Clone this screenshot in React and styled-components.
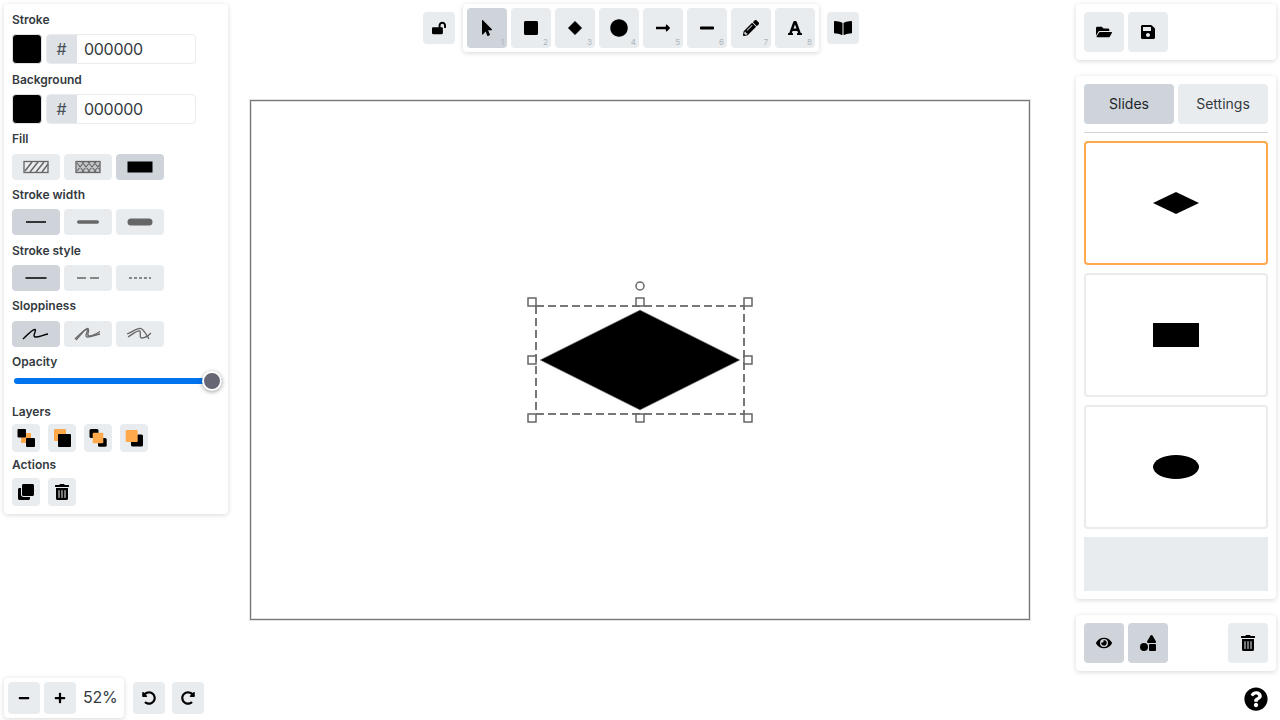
import React from "react";
import styled, { createGlobalStyle } from "styled-components";
import {
  FaLockOpen,
  FaMousePointer,
  FaSquare,
  FaCircle,
  FaLongArrowAltRight,
  FaMinus,
  FaPlus,
  FaPencilAlt,
  FaFont,
  FaBookOpen,
  FaFolderOpen,
  FaSave,
  FaEye,
  FaShapes,
  FaTrashAlt,
  FaQuestionCircle,
  FaUndoAlt,
  FaRedoAlt,
  FaClone,
} from "react-icons/fa";

const GlobalStyle = createGlobalStyle`
  html, body {
    margin: 0;
    background: #fff;
    font-family: Inter, "Liberation Sans", sans-serif;
    color: #212529;
  }
  * { box-sizing: border-box; }
`;

const Page = styled.div`
  width: 1280px;
  height: 720px;
  padding: 4px 4px 3px;
  display: grid;
  grid-template-columns: 246px 780px 246px;
  overflow: hidden;
`;

const LeftColumn = styled.div`
  display: flex;
  flex-direction: column;
  justify-content: space-between;
  align-items: flex-start;
`;

const CenterColumn = styled.div`
  display: flex;
  flex-direction: column;
  align-items: center;
`;

const RightColumn = styled.div`
  display: flex;
  flex-direction: column;
  align-items: flex-end;
  gap: 16px;
`;

const Panel = styled.div`
  background: #fff;
  border-radius: 4px;
  box-shadow: 0 1px 5px rgba(0, 0, 0, 0.16);
  padding: ${(p) => p.$padding || "8px"};
  width: ${(p) => p.$width || "auto"};
`;

const Label = styled.div`
  font-size: 12px;
  line-height: 14px;
  font-weight: 600;
  color: #343a40;
  margin-top: ${(p) => p.$top ?? 8}px;
  margin-bottom: ${(p) => p.$bottom ?? 8}px;
`;

const Row = styled.div`
  display: flex;
  align-items: center;
  gap: ${(p) => p.$gap ?? 4}px;
`;

const Swatch = styled.div`
  width: 30px;
  height: 30px;
  border-radius: 4px;
  background: #000;
  border: 1px solid #dee2e6;
`;

const HexGroup = styled.div`
  width: 150px;
  height: 30px;
  display: flex;
  border: 1px solid #e9ecef;
  border-radius: 4px;
  overflow: hidden;
`;

const HexPrefix = styled.div`
  width: 30px;
  padding-right: 1px;
  background: #dee2e6;
  color: #495057;
  font-size: 16px;
  display: flex;
  align-items: center;
  justify-content: center;
`;

const HexValue = styled.div`
  flex: 1;
  padding-left: 7px;
  font-size: 16px;
  letter-spacing: -0.3px;
  line-height: 28px;
  color: #343a40;
`;

const OptionButton = styled.div`
  width: 48px;
  height: 26px;
  border-radius: 4px;
  background: ${(p) => (p.$active ? "#ced4da" : "#e9ecef")};
  display: flex;
  align-items: center;
  justify-content: center;
`;

const SquareButton = styled.div`
  position: relative;
  width: ${(p) => p.$size || 40}px;
  height: ${(p) => p.$size || 40}px;
  flex: none;
  border-radius: 4px;
  background: ${(p) => (p.$active ? "#ced4da" : "#e9ecef")};
  color: #000;
  display: flex;
  align-items: center;
  justify-content: center;
  font-size: ${(p) => p.$icon || 16}px;
`;

const Shortcut = styled.span`
  position: absolute;
  right: 3px;
  bottom: 1px;
  font-size: 8px;
  line-height: 10px;
  color: #adb5bd;
`;

const OpacitySlider = styled.input`
  display: block;
  appearance: none;
  width: 208px;
  height: 20px;
  margin: 0 0 0 2px;
  background: transparent;

  &::-webkit-slider-runnable-track {
    height: 6px;
    border-radius: 3px;
    background: #0073ee;
  }
  &::-webkit-slider-thumb {
    appearance: none;
    width: 20px;
    height: 20px;
    margin-top: -7px;
    border-radius: 50%;
    background: #666675;
    border: 2px solid #fff;
    box-shadow: 0 1px 4px rgba(0, 0, 0, 0.4);
  }
`;

const ZoomRow = styled.div`
  display: flex;
  align-items: center;
  gap: 9px;
`;

const ZoomValue = styled.span`
  width: 40px;
  padding: 0 0 2px 3px;
  font-size: 16px;
  letter-spacing: -0.2px;
  line-height: 30px;
  color: #343a40;
`;

const ToolRow = styled.div`
  display: flex;
  align-items: center;
  gap: 8px;
  margin: 0 0 48px 2px;
`;

const CanvasFrame = styled.div`
  width: 780px;
  height: 520px;
  border: 1px solid #777;
  background: #fff;
  box-shadow: 0 0 0 1px rgba(0, 0, 0, 0.1), inset 0 0 0 1px rgba(0, 0, 0, 0.12);
`;

const Tab = styled.div`
  flex: 1;
  height: 40px;
  padding-bottom: 2px;
  border-radius: 4px;
  background: ${(p) => (p.$active ? "#ced4da" : "#e9ecef")};
  color: ${(p) => (p.$active ? "#212529" : "#343a40")};
  font-size: 14px;
  display: flex;
  align-items: center;
  justify-content: center;
`;

const Divider = styled.div`
  height: 1px;
  background: #ced4da;
  margin: 8px 0;
`;

const SlideList = styled.div`
  display: flex;
  flex-direction: column;
  gap: 8px;
`;

const SlideCard = styled.div`
  height: 124px;
  border-radius: 4px;
  border: 2px solid ${(p) => (p.$selected ? "#ffa94d" : "#e9ecef")};
  display: flex;
  align-items: center;
  justify-content: center;
`;

const AddSlide = styled.div`
  height: 54px;
  background: #e9ecef;
`;

const BottomRow = styled.div`
  display: flex;
  gap: 4px;
`;

const Spacer = styled.div`
  flex: 1;
`;

const HelpLink = styled.div`
  margin-top: auto;
  margin-right: 8px;
  margin-bottom: 7px;
  width: 24px;
  height: 24px;
  font-size: 24px;
  line-height: 0;
  color: #000;
`;

const HatchIcon = () => (
  <svg width="26" height="14" viewBox="0 0 26 14">
    <rect x="1" y="1.500" width="24" height="11" fill="none" stroke="#666" strokeWidth="1.300" />
    <path d="M2 11l7-9M7 12l8-10M13 12l8-10M19 12l6-8" stroke="#666" strokeWidth="1.500" />
  </svg>
);

const CrossIcon = () => (
  <svg width="26" height="14" viewBox="0 0 26 14">
    <rect x="1" y="1.500" width="24" height="11" fill="#c4c8cc" stroke="#666" strokeWidth="1.300" />
    <path
      d="M2 11l7-9M7 12l8-10M13 12l8-10M19 12l6-8M2 3l7 9M7 2l8 10M13 2l8 10M19 2l6 8"
      stroke="#666"
      strokeWidth="1.200"
    />
  </svg>
);

const SolidIcon = () => (
  <svg width="26" height="14" viewBox="0 0 26 14">
    <rect x="0.500" y="1.500" width="25" height="11" fill="#000" />
  </svg>
);

const LineIcon = ({ width, height, color = "#000", dash, round }) => (
  <svg width="28" height="10" viewBox="0 0 28 10">
    <line
      x1={(28 - width) / 2 + (round ? height / 2 : 0)}
      x2={(28 + width) / 2 - (round ? height / 2 : 0)}
      y1="5"
      y2="5"
      stroke={color}
      strokeWidth={height}
      strokeDasharray={dash}
      strokeLinecap={round ? "round" : "butt"}
    />
  </svg>
);

const squiggle = "M1 13C6 8 11 3 13 3.500C15 4.500 10 10 13 11C16 11.500 21 9 26 8";

const SloppyIcon = ({ level }) => (
  <svg width="28" height="16" viewBox="0 0 28 16" fill="none">
    {level === 0 && <path d={squiggle} stroke="#000" strokeWidth="1.400" />}
    {level === 1 && (
      <>
        <path d={squiggle} stroke="#666" strokeWidth="1.300" />
        <path d="M2 14C7 9 11 2 14 2.500C16 4 12 10 15 10C18 10 22 8 26 5.500" stroke="#666" strokeWidth="1.300" />
      </>
    )}
    {level === 2 && (
      <>
        <path d="M1 8C6 6 11 2 15 2.500C18 4 20 8 23 13" stroke="#666" strokeWidth="1.300" />
        <path d="M2 11C7 8 11 4 14 5C15 8 13 12 16 12C19 12 22 10 25 7" stroke="#666" strokeWidth="1.300" />
      </>
    )}
  </svg>
);

const LayerIcon = ({ kind }) => {
  const orange = "#ffa94d";
  return (
    <svg width="20" height="20" viewBox="0 0 20 20">
      {kind === 0 && (
        <>
          <rect x="5" y="5" width="10" height="10" fill={orange} />
          <rect x="1.500" y="1" width="8.500" height="8.500" rx="1" fill="#000" />
          <rect x="10" y="10" width="9" height="9" rx="1" fill="#000" />
        </>
      )}
      {kind === 1 && (
        <>
          <rect x="2" y="1" width="12" height="12" rx="1" fill={orange} />
          <rect x="6" y="6" width="13" height="13" rx="1" fill="#000" />
        </>
      )}
      {kind === 2 && (
        <>
          <rect x="1.500" y="1" width="9" height="9" rx="1.500" fill="#000" />
          <rect x="10" y="10" width="8.700" height="8.700" rx="1.500" fill="#000" />
          <rect x="4.700" y="4.700" width="10.600" height="10.600" rx="1" fill={orange} />
        </>
      )}
      {kind === 3 && (
        <>
          <rect x="7" y="6.500" width="12" height="12" rx="1.500" fill="#000" />
          <rect x="1.700" y="2" width="12" height="12" rx="1" fill={orange} />
        </>
      )}
    </svg>
  );
};

const DiamondIcon = () => (
  <svg width="16" height="16" viewBox="0 0 16 16">
    <polygon points="8,1.500 14.500,8 8,14.500 1.500,8" fill="#000" stroke="#000" strokeLinejoin="round" />
  </svg>
);

const tools = [
  { icon: <FaMousePointer />, active: true },
  { icon: <FaSquare /> },
  { icon: <DiamondIcon /> },
  { icon: <FaCircle />, size: 18 },
  { icon: <FaLongArrowAltRight /> },
  { icon: <FaMinus /> },
  { icon: <FaPencilAlt /> },
  { icon: <FaFont /> },
];

const handleSpots = [
  [532, 302],
  [640, 302],
  [748, 302],
  [532, 360],
  [748, 360],
  [532, 418],
  [640, 418],
  [748, 418],
];

const Stage = () => (
  <svg width="778" height="518" viewBox="251 101 778 518" style={{ display: "block" }}>
    <polygon points="640,310 740,360 640,410 540,360" fill="#000" stroke="#999" strokeWidth="0.600" />
    <rect x="536" y="306" width="208" height="108" fill="none" stroke="#777" strokeWidth="2" strokeDasharray="8 4" />
    {handleSpots.map(([x, y]) => (
      <rect key={`${x}-${y}`} x={x - 4} y={y - 4} width="8" height="8" fill="#fff" fillOpacity="0.6" stroke="#666" strokeWidth="1.500" />
    ))}
    <circle cx="640" cy="286" r="4" fill="#fff" stroke="#666" strokeWidth="1.500" />
  </svg>
);

const SlideShape = ({ kind }) => (
  <svg width="46" height="24" viewBox="0 0 46 24">
    {kind === "diamond" && <polygon points="23,1 46,12 23,23 0,12" fill="#000" />}
    {kind === "rect" && <rect width="46" height="24" fill="#000" />}
    {kind === "ellipse" && <ellipse cx="23" cy="12" rx="23" ry="12" fill="#000" />}
  </svg>
);

export default function App() {
  return (
    <>
      <GlobalStyle />
      <Page>
        <LeftColumn>
          <Panel $width="224px">
            <Label $top={1} $bottom={7}>Stroke</Label>
            <Row>
              <Swatch />
              <HexGroup>
                <HexPrefix>#</HexPrefix>
                <HexValue>000000</HexValue>
              </HexGroup>
            </Row>
            <Label $top={9} $bottom={7}>Background</Label>
            <Row>
              <Swatch />
              <HexGroup>
                <HexPrefix>#</HexPrefix>
                <HexValue>000000</HexValue>
              </HexGroup>
            </Row>
            <Label>Fill</Label>
            <Row>
              <OptionButton><HatchIcon /></OptionButton>
              <OptionButton><CrossIcon /></OptionButton>
              <OptionButton $active><SolidIcon /></OptionButton>
            </Row>
            <Label $bottom={7}>Stroke width</Label>
            <Row>
              <OptionButton $active><LineIcon width={20} height={1.5} /></OptionButton>
              <OptionButton><LineIcon width={22} height={3.5} color="#666" round /></OptionButton>
              <OptionButton><LineIcon width={25} height={7} color="#666" round /></OptionButton>
            </Row>
            <Label $top={9} $bottom={7}>Stroke style</Label>
            <Row>
              <OptionButton $active><LineIcon width={21} height={1.5} /></OptionButton>
              <OptionButton><LineIcon width={22} height={1.5} color="#666" dash="9 4" /></OptionButton>
              <OptionButton><LineIcon width={22} height={1.5} color="#666" dash="3 2" /></OptionButton>
            </Row>
            <Label>Sloppiness</Label>
            <Row>
              <OptionButton $active><SloppyIcon level={0} /></OptionButton>
              <OptionButton><SloppyIcon level={1} /></OptionButton>
              <OptionButton><SloppyIcon level={2} /></OptionButton>
            </Row>
            <Label $bottom={2}>Opacity</Label>
            <OpacitySlider type="range" min="0" max="100" defaultValue="100" />
            <Label $top={14} $bottom={5}>Layers</Label>
            <Row $gap={8}>
              {[0, 1, 2, 3].map((kind) => (
                <SquareButton key={kind} $size={28}><LayerIcon kind={kind} /></SquareButton>
              ))}
            </Row>
            <Label $top={6} $bottom={6}>Actions</Label>
            <Row $gap={8}>
              <SquareButton $size={28} $icon={16}><FaClone /></SquareButton>
              <SquareButton $size={28} $icon={16}><FaTrashAlt /></SquareButton>
            </Row>
          </Panel>
          <ZoomRow>
            <Panel $padding="4px">
              <Row>
                <SquareButton $size={32} $icon={12}><FaMinus /></SquareButton>
                <SquareButton $size={32} $icon={12}><FaPlus /></SquareButton>
                <ZoomValue>52%</ZoomValue>
              </Row>
            </Panel>
            <Row $gap={7}>
              <SquareButton $size={32} $icon={14}><FaUndoAlt /></SquareButton>
              <SquareButton $size={32} $icon={14}><FaRedoAlt /></SquareButton>
            </Row>
          </ZoomRow>
        </LeftColumn>

        <CenterColumn>
          <ToolRow>
            <SquareButton $size={32} $icon={14}><FaLockOpen /></SquareButton>
            <Panel $padding="4px">
              <Row>
                {tools.map((tool, i) => (
                  <SquareButton key={i} $active={tool.active} $icon={tool.size || 16}>
                    {tool.icon}
                    <Shortcut>{i + 1}</Shortcut>
                  </SquareButton>
                ))}
              </Row>
            </Panel>
            <SquareButton $size={32} $icon={18}><FaBookOpen /></SquareButton>
          </ToolRow>
          <CanvasFrame><Stage /></CanvasFrame>
        </CenterColumn>

        <RightColumn>
          <Panel $width="200px">
            <Row>
              <SquareButton><FaFolderOpen /></SquareButton>
              <SquareButton><FaSave /></SquareButton>
            </Row>
          </Panel>
          <Panel $width="200px">
            <Row>
              <Tab $active>Slides</Tab>
              <Tab>Settings</Tab>
            </Row>
            <Divider />
            <SlideList>
              <SlideCard $selected><SlideShape kind="diamond" /></SlideCard>
              <SlideCard><SlideShape kind="rect" /></SlideCard>
              <SlideCard><SlideShape kind="ellipse" /></SlideCard>
              <AddSlide />
            </SlideList>
          </Panel>
          <Panel $width="200px">
            <BottomRow>
              <SquareButton $active><FaEye /></SquareButton>
              <SquareButton $active><FaShapes /></SquareButton>
              <Spacer />
              <SquareButton><FaTrashAlt /></SquareButton>
            </BottomRow>
          </Panel>
          <HelpLink><FaQuestionCircle /></HelpLink>
        </RightColumn>
      </Page>
    </>
  );
}
